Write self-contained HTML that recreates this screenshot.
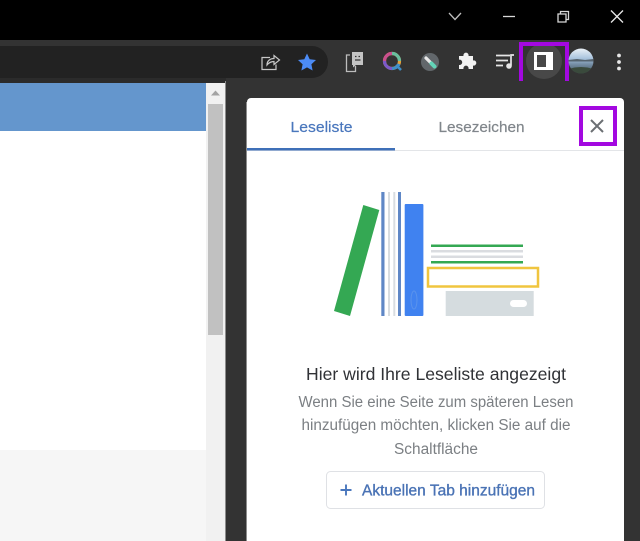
<!DOCTYPE html>
<html lang="de"><head><meta charset="utf-8"><title>Leseliste</title>
<style>
html,body{margin:0;padding:0;background:#000;overflow:hidden}
svg{display:block;filter:blur(.35px)}
text{font-family:"Liberation Sans",sans-serif}
</style></head><body>
<svg width="640" height="541" viewBox="0 0 640 541" xmlns="http://www.w3.org/2000/svg">
<defs>
<clipPath id="av"><circle cx="581" cy="61" r="12.500"/></clipPath>
<linearGradient id="sky" x1="0" y1="0" x2="0" y2="1"><stop offset="0" stop-color="#eef3f8"/><stop offset=".4" stop-color="#a9c4de"/><stop offset=".6" stop-color="#7a93ab"/><stop offset="1" stop-color="#3c4f55"/></linearGradient>
</defs>
<rect width="640" height="541" fill="#000"/>
<!-- window controls -->
<path d="M449 13l6 6.500 6-6.500" fill="none" stroke="#bdbdbd" stroke-width="1.300"/>
<path d="M503 16.500h12" stroke="#d8d8d8" stroke-width="1.300"/>
<path d="M558 14h8v8h-8zM560.500 14v-2.500h8v8H566" fill="none" stroke="#d8d8d8" stroke-width="1.300"/>
<path d="M611 10.500l12 12M623 10.500l-12 12" stroke="#e8e8e8" stroke-width="1.300"/>
<!-- toolbar -->
<rect y="40" width="640" height="41" fill="#333"/>
<path d="M0 46H312a16 16 0 0 1 16 16a16 16 0 0 1-16 16H0z" fill="#222"/>
<rect y="78" width="226" height="5" fill="#2b2b2b"/>
<!-- omnibox icons -->
<path d="M270 57.500h-8v12h14v-5" fill="none" stroke="#c8c8c8" stroke-width="1.200"/>
<path d="M267 65c0-4 3-6.500 7-6.500v-3l5.500 4.500-5.500 4.500v-3c-3 0-5 1-7 3.500z" fill="none" stroke="#c8c8c8" stroke-width="1.200"/>
<path d="M307 53.500l2.700 5.700 6.300.8-4.600 4.300 1.200 6.200-5.600-3.100-5.600 3.100 1.200-6.200-4.600-4.300 6.300-.8z" fill="#4c8bf5"/>
<!-- reader mode icon -->
<path d="M350 55h-3.500v16.500h9V66" fill="none" stroke="#bdbdbd" stroke-width="1.300"/>
<path d="M352 52h11v13h-7l-3 2.500v-2.500h-1z" fill="#c4c4c4"/>
<path d="M355 56.500h1.500M358.500 56.500h1.500M355 60h5.500" stroke="#333" stroke-width="1.200"/>
<!-- Q ring -->
<circle cx="392" cy="61" r="7.500" fill="none" stroke="#e5a13a" stroke-width="3.200"/>
<path d="M392 53.500a7.500 7.500 0 0 0-7.500 7.500" fill="none" stroke="#c94f8e" stroke-width="3.200"/>
<path d="M384.500 61a7.500 7.500 0 0 0 7.500 7.500" fill="none" stroke="#7b59c9" stroke-width="3.200"/>
<path d="M392 68.500a7.500 7.500 0 0 0 7-4.500" fill="none" stroke="#3f8fc9" stroke-width="3.200"/>
<path d="M392 53.500a7.500 7.500 0 0 1 7.500 7.500" fill="none" stroke="#69bfa0" stroke-width="3.200"/>
<path d="M396 65l5 5" stroke="#3f8fc9" stroke-width="2.600"/>
<!-- grey circle wrench -->
<circle cx="430" cy="62" r="9" fill="#62676b"/>
<path d="M426 58l5 5" stroke="#e8e8e8" stroke-width="3.200" stroke-linecap="round"/>
<path d="M431.500 63.500l3 3" stroke="#63d4b8" stroke-width="4" stroke-linecap="round"/>
<!-- puzzle -->
<path d="M459 58h4.500a2.600 2.600 0 1 1 5 0H473v4.500a2.600 2.600 0 1 1 0 5V71h-4.500a2.600 2.600 0 1 0-5 0H459v-4a2.700 2.700 0 1 0 0-5.300z" fill="#f2f2f2" transform="translate(0 -2)"/>
<!-- media -->
<path d="M496 55.500h14M496 60.500h12M496 65.500h7" stroke="#e6e6e6" stroke-width="1.700"/>
<path d="M511 65.500V55h3" fill="none" stroke="#e6e6e6" stroke-width="1.700"/>
<circle cx="509" cy="66" r="2.800" fill="#e6e6e6"/>
<!-- side panel button -->
<circle cx="544" cy="61" r="18" fill="#484848"/>
<rect x="535.500" y="53.500" width="16" height="15" fill="none" stroke="#fff" stroke-width="3"/>
<rect x="546" y="52" width="6" height="18" fill="#fff"/>
<rect x="521" y="44" width="46" height="41" fill="none" stroke="#a308e0" stroke-width="4"/>
<!-- avatar -->
<g clip-path="url(#av)"><rect x="568" y="48" width="26" height="26" fill="url(#sky)"/><path d="M568 60l9-1 8 1 9-1v2.500h-26z" fill="#55636e"/><path d="M568 69q13-4 26 0v6h-26z" fill="#3a4a3c"/></g>
<!-- dots -->
<circle cx="619" cy="55.500" r="1.900" fill="#e8e8e8"/><circle cx="619" cy="62" r="1.900" fill="#e8e8e8"/><circle cx="619" cy="68.500" r="1.900" fill="#e8e8e8"/>
<!-- page -->
<rect y="83" width="226" height="458" fill="#fff"/>
<rect y="83" width="206" height="48" fill="#6496cd"/>
<rect y="450" width="206" height="91" fill="#f6f6f6"/>
<rect x="206" y="83" width="19" height="458" fill="#f1f1f1"/>
<path d="M215.500 90.500l4.500 5h-9z" fill="#a3a3a3"/>
<rect x="208" y="104" width="15" height="231" fill="#c1c1c1"/>
<!-- side panel -->
<rect x="225" y="81" width="1" height="460" fill="#8d8d8d"/>
<rect x="226" y="81" width="414" height="460" fill="#333"/>
<path d="M247 541V102a4 4 0 0 1 4-4H620a4 4 0 0 1 4 4V541z" fill="#fff"/>
<path d="M246.500 541V102" stroke="#8d8d8d" stroke-width="1"/>
<!-- tabs -->
<text x="321.500" y="132" font-size="15" fill="#4a77bd" stroke="#4a77bd" stroke-width=".2" text-anchor="middle" textLength="62" lengthAdjust="spacingAndGlyphs">Leseliste</text>
<text x="481.500" y="132" font-size="15" fill="#80868b" stroke="#80868b" stroke-width=".2" text-anchor="middle" textLength="86" lengthAdjust="spacingAndGlyphs">Lesezeichen</text>
<rect x="247" y="150" width="377" height="1" fill="#e3e5e8"/>
<rect x="247" y="148" width="148" height="2.500" fill="#3f70b8"/>
<rect x="581" y="108" width="34" height="36" fill="none" stroke="#a308e0" stroke-width="4"/>
<path d="M591 120l12 12M603 120l-12 12" stroke="#6b6f73" stroke-width="2"/>
<!-- illustration -->
<path d="M363.300 205l16 5L350 316l-16-5z" fill="#34a853"/>
<rect x="381.300" y="192" width="3.200" height="124" fill="#5f87c6"/>
<rect x="388" y="192" width="2" height="124" fill="#d9dde0"/>
<rect x="393.300" y="192" width="2" height="124" fill="#d9dde0"/>
<rect x="398" y="192" width="3" height="124" fill="#5f87c6"/>
<rect x="404.700" y="204" width="18.700" height="112" rx="1" fill="#4082f0"/>
<ellipse cx="414" cy="300" rx="3" ry="9" fill="none" stroke="#5a93ec" stroke-width="1"/>
<rect x="431" y="244.500" width="92" height="2.500" fill="#34a853"/>
<rect x="431" y="250" width="92" height="2.500" fill="#dadce0"/>
<rect x="431" y="255.500" width="92" height="2.500" fill="#dadce0"/>
<rect x="431" y="261" width="92" height="2.500" fill="#34a853"/>
<rect x="428" y="268" width="110" height="18.500" fill="#fff" stroke="#f0c53f" stroke-width="2.500"/>
<rect x="445.700" y="291" width="88" height="25" fill="#d5dcdf"/>
<rect x="510" y="300" width="17" height="7" rx="3.500" fill="#fff"/>
<!-- text -->
<text x="436" y="380" font-size="17.500" fill="#303236" text-anchor="middle" textLength="260" lengthAdjust="spacingAndGlyphs">Hier wird Ihre Leseliste angezeigt</text>
<text x="436" y="407" font-size="15.500" fill="#7b7f83" text-anchor="middle" textLength="275" lengthAdjust="spacingAndGlyphs">Wenn Sie eine Seite zum späteren Lesen</text>
<text x="436" y="430" font-size="15.500" fill="#7b7f83" text-anchor="middle" textLength="269" lengthAdjust="spacingAndGlyphs">hinzufügen möchten, klicken Sie auf die</text>
<text x="436" y="454" font-size="15.500" fill="#7b7f83" text-anchor="middle" textLength="84" lengthAdjust="spacingAndGlyphs">Schaltfläche</text>
<!-- button -->
<rect x="326.500" y="471.500" width="218" height="37" rx="4" fill="#fff" stroke="#dfe1e5"/>
<path d="M346 484.500v11M340.500 490h11" stroke="#4a77bd" stroke-width="1.900"/>
<text x="362" y="495.500" font-size="15.500" fill="#4a73b5" stroke="#4a73b5" stroke-width=".35" textLength="173" lengthAdjust="spacingAndGlyphs">Aktuellen Tab hinzufügen</text>
</svg>
</body></html>
